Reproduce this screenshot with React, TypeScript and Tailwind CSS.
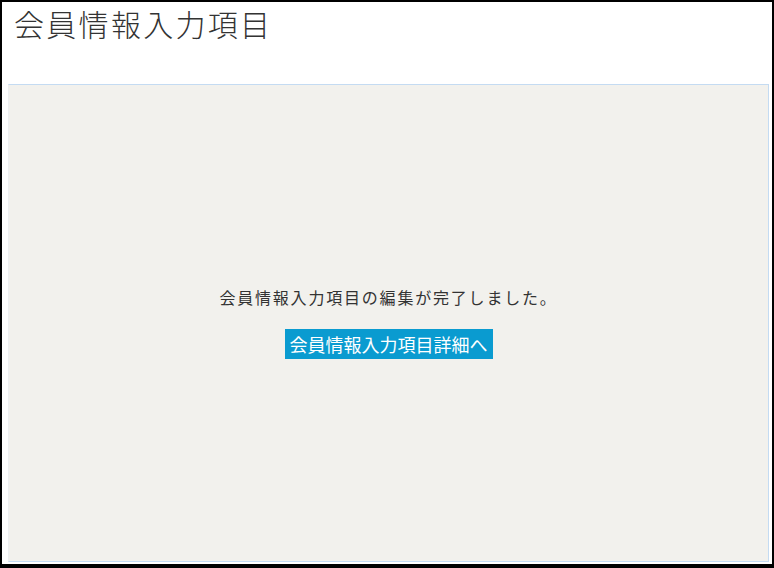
import React from 'react';

const App = () => {
  return (
    <div
      className="w-[774px] h-[568px] bg-white border-black border-t-2 border-l-2 border-r-2 border-b-4 flex flex-col text-[#333]"
      style={{ fontFamily: '"Noto Sans CJK JP", "Noto Sans", sans-serif' }}
    >
      {/* page heading */}
      <div className="h-[82px] shrink-0 pl-[12px] pt-[1px]">
        <h1 className="text-[30px] leading-[40px] font-light tracking-[2.3px]">会員情報入力項目</h1>
      </div>

      {/* result panel */}
      <div className="flex-1 ml-[6px] mr-[3px] mb-[2px] bg-[#f2f1ed] border border-[#c4dbf2] border-l-[#eef0f2] flex flex-col items-center justify-center">
        <p className="text-[16px] leading-[24px] tracking-[1.8px] mt-[-3px]">
          会員情報入力項目の編集が完了しました。
        </p>
        <button className="mt-[20px] h-[30px] px-[5px] bg-[#0a9bd0] text-white text-[18px] leading-[30px]">
          会員情報入力項目詳細へ
        </button>
      </div>
    </div>
  );
};

export default App;
